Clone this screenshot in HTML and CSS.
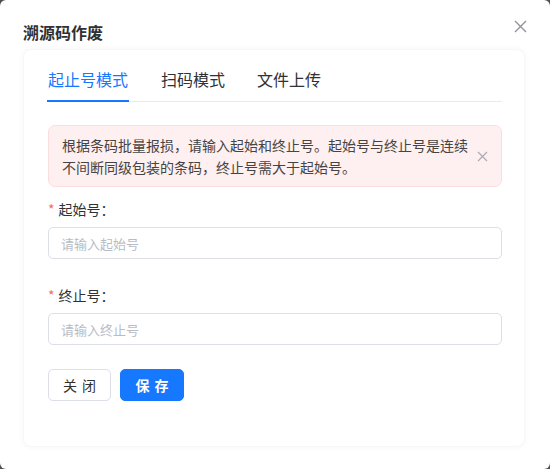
FILE: index.html
```html
<!DOCTYPE html>
<html lang="zh-CN">
<head>
<meta charset="utf-8">
<title>溯源码作废</title>
<link rel="stylesheet" href="styles.css">
</head>
<body>
<div class="dialog">
  <div class="dialog-header">
    <span class="dialog-title">溯源码作废</span>
    <button class="dialog-close" aria-label="关闭">
      <svg width="13" height="13" viewBox="0 0 13 13"><path d="M1 1L12 12M12 1L1 12" stroke="#909399" stroke-width="1.4" fill="none"/></svg>
    </button>
  </div>
  <div class="card">
    <div class="tabs">
      <div class="tab active">起止号模式</div>
      <div class="tab">扫码模式</div>
      <div class="tab">文件上传</div>
    </div>
    <div class="alert">
      <span class="alert-text">根据条码批量报损，请输入起始和终止号。起始号与终止号是连续<br>不间断同级包装的条码，终止号需大于起始号。</span>
      <svg class="alert-close" width="11" height="11" viewBox="0 0 11 11"><path d="M1 1L10 10M10 1L1 10" stroke="#a8abb2" stroke-width="1.2" fill="none"/></svg>
    </div>
    <div class="form-item">
      <label class="label"><span class="req">*</span>起始号：</label>
      <div class="input"><span class="placeholder">请输入起始号</span></div>
    </div>
    <div class="form-item second">
      <label class="label"><span class="req">*</span>终止号：</label>
      <div class="input"><span class="placeholder">请输入终止号</span></div>
    </div>
    <div class="actions">
      <button class="btn">关闭</button>
      <button class="btn primary">保存</button>
    </div>
  </div>
</div>
</body>
</html>
```
FILE: styles.css
```css
html, body {
  margin: 0;
  padding: 0;
  background: #4f4f4f;
}
body {
  font-family: "Noto Sans CJK SC", "Noto Sans", sans-serif;
  color: #303133;
}
.dialog {
  position: relative;
  width: 550px;
  height: 469px;
  background: #ffffff;
  border-radius: 6px;
  box-sizing: border-box;
  display: flex;
  flex-direction: column;
}
.dialog-header {
  height: 49px;
  box-sizing: border-box;
  padding: 20px 23px 0;
}
.dialog-title {
  font-size: 16px;
  font-weight: 700;
  line-height: 22px;
  color: #303133;
}
.dialog-close {
  position: absolute;
  top: 20px;
  right: 23px;
  width: 13px;
  height: 13px;
  padding: 0;
  border: 0;
  background: none;
  display: block;
}
.dialog-close svg { display: block; }
.card {
  margin: 0 25px 0 23px;
  height: 398px;
  box-sizing: border-box;
  border-radius: 8px;
  background: #fff;
  box-shadow: 0 0 6px rgba(0, 0, 0, 0.045);
  border: 1px solid #f6f7f9;
  padding: 9px 22px 0 23px;
}
.tabs {
  display: flex;
  gap: 32px;
  border-bottom: 1px solid #e9ebf0;
}
.tab {
  position: relative;
  font-size: 16px;
  line-height: 40px;
  height: 42px;
  color: #303133;
}
.tab.active {
  color: #1677ff;
  padding: 0 1px;
}
.tab.active::after {
  content: "";
  position: absolute;
  left: 0;
  right: 0;
  bottom: -1px;
  height: 2px;
  background: #1677ff;
}
.alert {
  position: relative;
  margin: 23px 0 0 1px;
  background: #fef0f0;
  border: 1px solid #fcdede;
  border-radius: 7px;
  padding: 8px 30px 8px 13px;
  font-size: 14px;
  line-height: 22px;
  color: #444;
}
.alert-text {
  white-space: nowrap;
}
.alert-close {
  position: absolute;
  right: 13px;
  top: 25px;
}
.form-item {
  margin: 11px 0 0 1px;
}
.form-item.second {
  margin-top: 25px;
}
.label {
  display: block;
  font-size: 14px;
  line-height: 22px;
  color: #303133;
}
.req {
  color: #f56c6c;
  margin-right: 4px;
}
.input {
  margin-top: 7px;
  height: 32px;
  box-sizing: border-box;
  border: 1px solid #dcdfe6;
  border-radius: 5px;
  padding: 0 12px;
  display: flex;
  align-items: center;
}
.placeholder {
  font-size: 13px;
  color: #b8bcc4;
}
.actions {
  margin: 24px 0 0 1px;
  display: flex;
  gap: 9px;
}
.btn {
  height: 32px;
  width: 63px;
  box-sizing: border-box;
  border: 1px solid #dcdfe6;
  border-radius: 5px;
  background: #fff;
  font-family: "Noto Sans CJK SC", "Noto Sans", sans-serif;
  font-size: 14px;
  letter-spacing: 5px;
  padding: 0 0 0 5px;
  color: #303133;
}
.btn.primary {
  width: 64px;
  background: #1677ff;
  border-color: #1677ff;
  color: #fff;
  font-weight: 700;
}
```
